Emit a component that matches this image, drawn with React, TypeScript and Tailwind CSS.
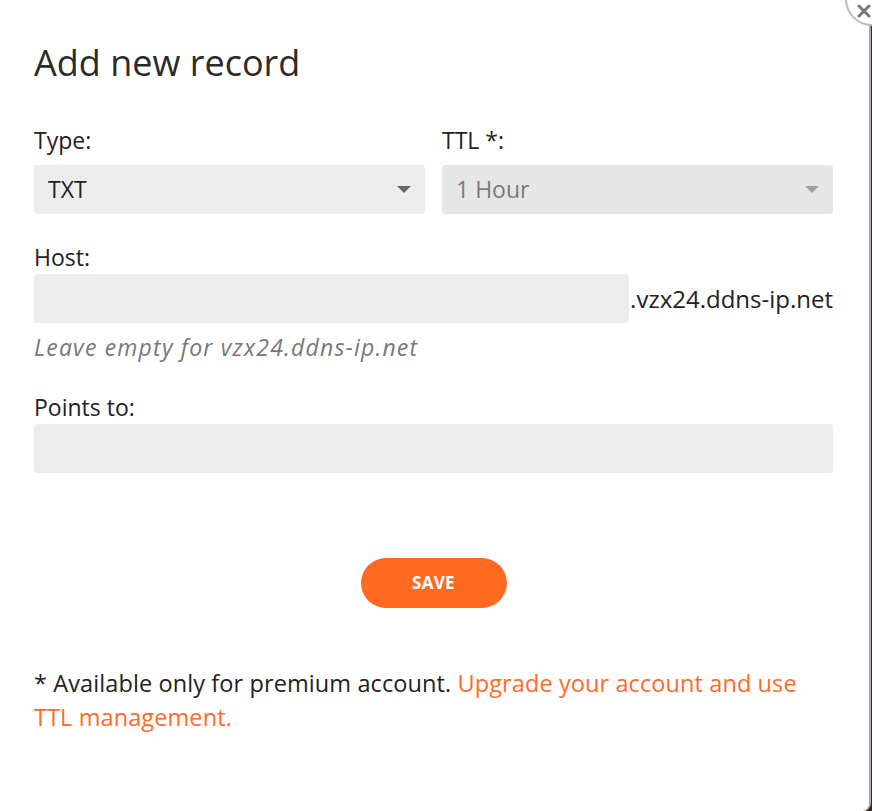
import React from "react";

export default function App() {
  const font = { fontFamily: "'Open Sans', Lato, sans-serif" };
  return (
    <div className="relative w-[872px] h-[811px] overflow-hidden bg-[#3b2a22]" style={font}>
      <div className="w-[871px] h-[811px] bg-white rounded-br-[8px] border-r-2 border-[#a8a8a8] pl-[34px] pr-[36px] pt-[41px] text-[#222]">
        <h1 className="text-[36px] leading-[44px] font-normal text-[#2b2b2b]">Add new record</h1>

        <div className="mt-[40px] grid grid-cols-2 gap-x-[17px]">
          <div className="flex flex-col">
            <label className="text-[23px] leading-[30px] mb-[10px]">Type:</label>
            <div className="h-[49px] rounded-[4px] bg-[#ececec] flex items-center justify-between px-[14px]">
              <span className="text-[23px] text-[#222]">TXT</span>
              <svg width="14" height="8" viewBox="0 0 14 8"><path d="M0 0h14L7 7z" fill="#666" /></svg>
            </div>
          </div>
          <div className="flex flex-col">
            <label className="text-[23px] leading-[30px] mb-[10px]">TTL *:</label>
            <div className="h-[49px] rounded-[4px] bg-[#e6e6e6] flex items-center justify-between px-[14px]">
              <span className="text-[23px] text-[#7a7a7a]">1 Hour</span>
              <svg width="14" height="8" viewBox="0 0 14 8"><path d="M0 0h14L7 7z" fill="#a0a0a0" /></svg>
            </div>
          </div>
        </div>

        <div className="mt-[28px] flex flex-col">
          <label className="text-[23px] leading-[30px] mb-[2px]">Host:</label>
          <div className="flex items-center">
            <div className="flex-1 min-w-0 h-[49px] rounded-[4px] bg-[#ececec]" />
            <span className="text-[24px] ml-[1px] whitespace-nowrap">.vzx24.ddns-ip.net</span>
          </div>
          <p className="mt-[9px] text-[23px] leading-[30px] italic text-[#777] tracking-[1.2px]">Leave empty for vzx24.ddns-ip.net</p>
        </div>

        <div className="mt-[30px] flex flex-col">
          <label className="text-[23px] leading-[30px] mb-[2px]">Points to:</label>
          <div className="h-[49px] rounded-[4px] bg-[#ececec]" />
        </div>

        <div className="mt-[85px] flex justify-center">
          <button className="w-[146px] h-[50px] rounded-full bg-[#ff6a22] text-white font-bold text-[17px] tracking-[0.3px]">SAVE</button>
        </div>

        <p className="mt-[58px] text-[23.5px] leading-[34px] text-[#222] w-[790px] tracking-[0.1px]">
          * Available only for premium account.{" "}
          <span className="text-[#ff6a2b]">Upgrade your account and use TTL management.</span>
        </p>
      </div>

      <div className="absolute left-[845px] top-[-28px] w-[54px] h-[54px] rounded-full bg-white border-2 border-[#bdbdbd] flex items-center justify-center">
        <svg width="14" height="14" viewBox="0 0 14 14" className="translate-x-[-8px] translate-y-[12px]">
          <path d="M2 2l10 10M12 2L2 12" stroke="#777" strokeWidth="3" strokeLinecap="round" />
        </svg>
      </div>
    </div>
  );
}
